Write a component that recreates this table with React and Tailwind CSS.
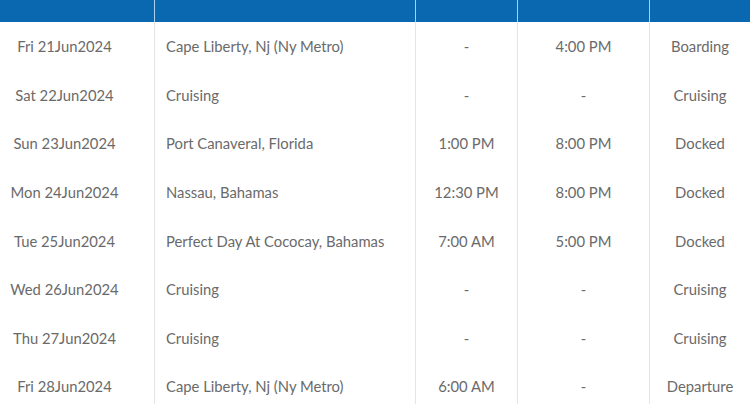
const rows = [
  { date: "Fri 21Jun2024", port: "Cape Liberty, Nj (Ny Metro)", arrive: "-", depart: "4:00 PM", status: "Boarding" },
  { date: "Sat 22Jun2024", port: "Cruising", arrive: "-", depart: "-", status: "Cruising" },
  { date: "Sun 23Jun2024", port: "Port Canaveral, Florida", arrive: "1:00 PM", depart: "8:00 PM", status: "Docked" },
  { date: "Mon 24Jun2024", port: "Nassau, Bahamas", arrive: "12:30 PM", depart: "8:00 PM", status: "Docked" },
  { date: "Tue 25Jun2024", port: "Perfect Day At Cococay, Bahamas", arrive: "7:00 AM", depart: "5:00 PM", status: "Docked" },
  { date: "Wed 26Jun2024", port: "Cruising", arrive: "-", depart: "-", status: "Cruising" },
  { date: "Thu 27Jun2024", port: "Cruising", arrive: "-", depart: "-", status: "Cruising" },
  { date: "Fri 28Jun2024", port: "Cape Liberty, Nj (Ny Metro)", arrive: "6:00 AM", depart: "-", status: "Departure" },
];

// grille du tableau : mêmes largeurs pour l'en-tête et les lignes
const cols = "grid grid-cols-[155px_261px_102px_132px_1fr]";

export default function App() {
  return (
    <div className="w-[750px] h-[404px] overflow-hidden bg-white text-[14.8px] text-[#6a6a6a]" style={{ fontFamily: "Lato, 'Open Sans', sans-serif" }}>
      {/* en-tête bleu */}
      <div className={`${cols} h-[22px] bg-[#0a68b0]`}>
        <div className="border-r border-[#a9d0ee]" />
        <div className="border-r border-[#a9d0ee]" />
        <div className="border-r border-[#a9d0ee]" />
        <div className="border-r border-[#a9d0ee]" />
        <div />
      </div>

      {rows.map((r, i) => (
        <div key={i} className={`${cols} h-[48.6px] items-stretch`}>
          <div className="flex items-center justify-center pr-[25px] border-r border-[#e5e5e5]">{r.date}</div>
          <div className="flex items-center pl-[11px] border-r border-[#e5e5e5]">{r.port}</div>
          <div className="flex items-center justify-center border-r border-[#e5e5e5]">{r.arrive}</div>
          <div className="flex items-center justify-center border-r border-[#e5e5e5]">{r.depart}</div>
          <div className="flex items-center justify-center">{r.status}</div>
        </div>
      ))}
    </div>
  );
}
